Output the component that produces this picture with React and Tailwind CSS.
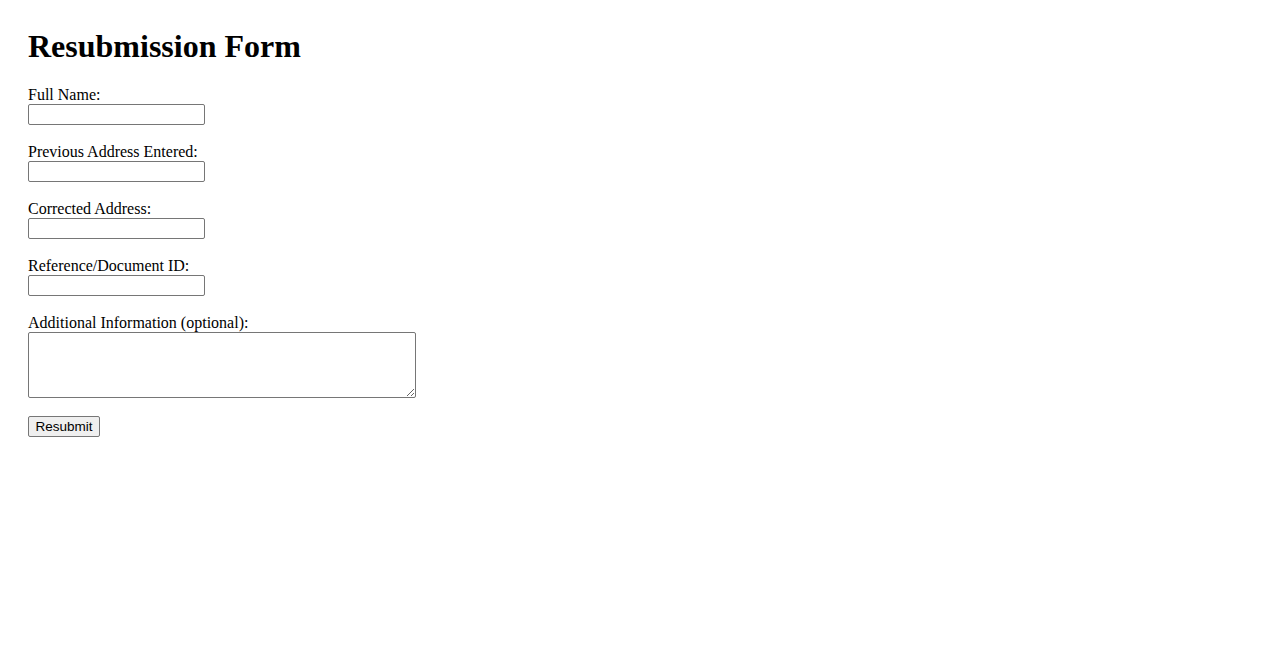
export default function App() {
  const fields = [
    "Full Name:",
    "Previous Address Entered:",
    "Corrected Address:",
    "Reference/Document ID:",
  ];
  return (
    <div className="min-h-[650px] bg-white p-[28px] text-black font-['Liberation_Serif',serif] text-[16px]">
      <h1 className="m-0 mb-[21px] text-[32px] leading-[37px] font-bold">Resubmission Form</h1>
      <form className="flex flex-col items-start" onSubmit={(e) => e.preventDefault()}>
        {fields.map((f) => (
          <div key={f} className="flex flex-col items-start mb-[18px]">
            <label className="block leading-[18px]">{f}</label>
            <input
              type="text"
              className="block w-[177px] h-[21px] border border-[#767676] rounded-[2px] bg-white px-[2px] text-[13.33px] font-['Liberation_Sans',sans-serif] outline-none"
            />
          </div>
        ))}
        <div className="flex flex-col items-start mb-[18px]">
          <label className="block leading-[18px]">Additional Information (optional):</label>
          <textarea
            className="block w-[388px] h-[66px] border border-[#767676] rounded-[2px] bg-white p-[2px] text-[13.33px] font-['Liberation_Mono',monospace] outline-none resize"
          />
        </div>
        <button
          type="submit"
          className="w-[72px] h-[21px] border border-[#767676] rounded-[2px] bg-[#efefef] text-center text-[13.5px] leading-[19px] text-black font-['Liberation_Sans',Arial,sans-serif]"
        >
          Resubmit
        </button>
      </form>
    </div>
  );
}
